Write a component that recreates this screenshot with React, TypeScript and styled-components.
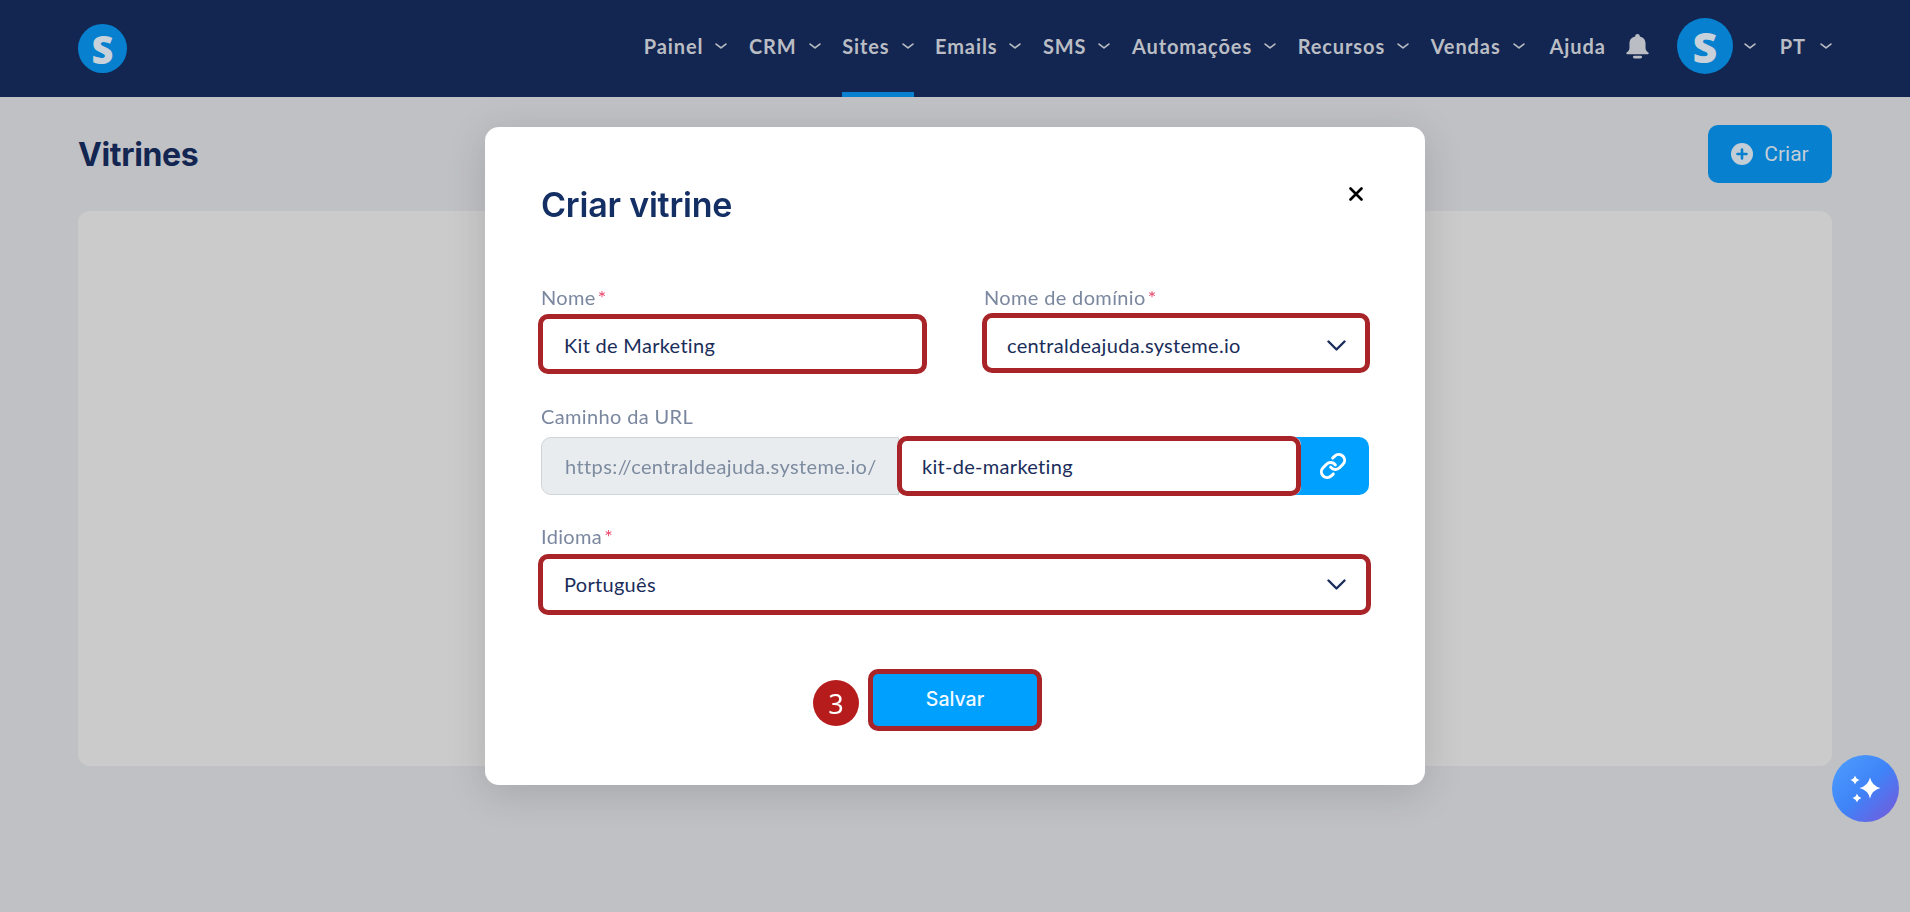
import React from "react";
import styled, { createGlobalStyle } from "styled-components";
import { Link as LinkIcon } from "lucide-react";

const Global = createGlobalStyle`
  html, body { margin: 0; height: 100%; overflow: hidden; background: #c0c1c5; }
  * { box-sizing: border-box; }
  body { font-family: "Lato", "Noto Sans", sans-serif; }
`;

const Bar = styled.header`
  height: 97px;
  background: #132651;
  display: flex;
  align-items: center;
  justify-content: space-between;
  padding: 0 78px;
`;

const LogoDot = styled.div`
  width: 49px;
  height: 49px;
  border-radius: 50%;
  background: #0680cf;
  color: #c9d2da;
  display: flex;
  align-items: center;
  justify-content: center;
  font: 800 38px/1 "Open Sans", sans-serif;
`;

const Nav = styled.nav`
  display: flex;
  align-items: center;
  height: 97px;
`;

const NavItem = styled.div<{ $active?: boolean; $after?: number; $gap?: number }>`
  height: 97px;
  display: flex;
  align-items: center;
  gap: ${(p) => p.$gap ?? 12}px;
  margin-right: ${(p) => p.$after ?? 21.5}px;
  border-bottom: 5px solid ${(p) => (p.$active ? "#0680cf" : "transparent")};
  color: #babdc4;
  font: 700 20px/1 "Lato", sans-serif;
  letter-spacing: 0.9px;
  white-space: nowrap;
`;

const BellWrap = styled.div`
  display: flex;
  margin: 0 28px 5px 0;
  color: #babdc4;
`;

const Avatar = styled.div`
  width: 56px;
  height: 56px;
  border-radius: 50%;
  background: #0680cf;
  color: #c9d2da;
  display: flex;
  align-items: center;
  justify-content: center;
  font: 800 43px/1 "Open Sans", sans-serif;
`;

const AvatarGroup = styled.div`
  display: flex;
  align-items: center;
  gap: 11px;
  margin: 0 24px 5px 0;
  color: #babdc4;
`;

const Main = styled.main`
  padding: 28px 78px 0;
`;

const PageHead = styled.div`
  display: flex;
  align-items: center;
  justify-content: space-between;
  height: 58px;
  margin-bottom: 28px;
`;

const PageTitle = styled.h1`
  margin: 0;
  padding-top: 2px;
  color: #132651;
  font: 700 32px/1 "Inter", sans-serif;
  letter-spacing: -0.35px;
`;

const CreateButton = styled.div`
  width: 124px;
  height: 58px;
  border-radius: 10px;
  background: #0680cf;
  color: #c3cdd6;
  display: flex;
  align-items: center;
  justify-content: center;
  gap: 11px;
  font: 400 21px/1 "Roboto", sans-serif;
`;

const Card = styled.section`
  width: 1754px;
  height: 555px;
  border-radius: 12px;
  background: #cbcbcc;
`;

const Overlay = styled.div`
  position: fixed;
  inset: 0;
  display: flex;
  justify-content: center;
  align-items: flex-start;
  padding-top: 127px;
`;

const Modal = styled.div`
  width: 940px;
  height: 658px;
  padding: 56px;
  background: #fff;
  border-radius: 14px;
  box-shadow: 0 8px 40px rgba(0, 0, 0, 0.14);
`;

const ModalHead = styled.div`
  display: flex;
  justify-content: space-between;
  align-items: flex-start;
  height: 103px;
`;

const ModalTitle = styled.h2`
  margin: 0;
  color: #132f63;
  font: 600 34px/44px "Inter", sans-serif;
  letter-spacing: -0.2px;
`;

const Close = styled.div`
  display: flex;
  margin: 4px 6px 0 0;
`;

const TwoCol = styled.div`
  display: grid;
  grid-template-columns: 383px 1fr;
  column-gap: 60px;
`;

const Field = styled.div<{ $top?: number }>`
  margin-top: ${(p) => p.$top ?? 0}px;
`;

const Label = styled.div<{ $gap?: number }>`
  height: 22px;
  margin-bottom: ${(p) => p.$gap ?? 8}px;
  color: #7a879e;
  font: 400 20px/22px "Lato", sans-serif;
  letter-spacing: 0.35px;
  white-space: nowrap;
`;

const Star = styled.span`
  color: #e8476a;
  margin-left: 2px;
`;

const Box = styled.div<{ $hl?: string }>`
  position: relative;
  height: 58px;
  padding: 0 23px;
  display: flex;
  align-items: center;
  justify-content: space-between;
  background: #fff;
  border-radius: 8px;
  color: #1a2d5a;
  font: 400 20px/1 "Lato", sans-serif;
  letter-spacing: 0.3px;
  white-space: nowrap;
  &::after {
    content: "";
    position: absolute;
    inset: ${(p) => p.$hl ?? "0"};
    border: 5px solid #a82428;
    border-radius: 10px;
    pointer-events: none;
  }
`;

const UrlRow = styled.div`
  display: flex;
  height: 58px;
`;

const Prefix = styled.div`
  width: 358px;
  padding-left: 23px;
  display: flex;
  align-items: center;
  background: #e9ecef;
  border: 1px solid #cfd4da;
  border-radius: 10px 0 0 10px;
  color: #7d8ba0;
  font: 400 20px/1 "Lato", sans-serif;
  letter-spacing: 0.4px;
  white-space: nowrap;
`;

const SlugBox = styled(Box)`
  width: 402px;
  z-index: 1;
`;

const LinkButton = styled.div`
  flex: 1;
  margin-left: -10px;
  padding-left: 5px;
  display: flex;
  align-items: center;
  justify-content: center;
  background: #00a0ff;
  color: #fff;
  border-radius: 0 10px 10px 0;
`;

const Footer = styled.div`
  display: flex;
  justify-content: center;
  margin-top: 59px;
`;

const Save = styled.div`
  position: relative;
  width: 168px;
  height: 56px;
  border-radius: 8px;
  background: #00a0ff;
  color: #f2faff;
  display: flex;
  align-items: center;
  justify-content: center;
  font: 500 19.5px/1 "Inter", sans-serif;
  &::after {
    content: "";
    position: absolute;
    inset: -3px;
    border: 5px solid #a82428;
    border-radius: 10px;
  }
`;

const StepBadge = styled.div`
  position: absolute;
  left: -58px;
  top: 8px;
  width: 46px;
  height: 46px;
  border-radius: 50%;
  background: #b71c1c;
  color: #fff;
  display: flex;
  align-items: center;
  justify-content: center;
  font: 400 27px/1 "Noto Sans", sans-serif;
`;

const Sparkle = styled.div`
  position: fixed;
  left: 1832px;
  top: 755px;
  width: 67px;
  height: 67px;
  border-radius: 50%;
  background: linear-gradient(135deg, #4d9fff 0%, #3f83f8 50%, #7a55d8 100%);
  display: flex;
`;

const Chevron = ({ w, h, sw }: { w: number; h: number; sw: number }) => (
  <svg width={w} height={h} viewBox={`0 0 ${w} ${h}`} fill="none" stroke="currentColor" strokeWidth={sw} strokeLinecap="round" strokeLinejoin="round">
    <polyline points={`${sw / 2 + 0.3},${sw / 2 + 0.3} ${w / 2},${h - sw / 2 - 0.3} ${w - sw / 2 - 0.3},${sw / 2 + 0.3}`} />
  </svg>
);

const NavChevron = () => <Chevron w={12} h={6} sw={1.6} />;

const items: { label: string; after?: number }[] = [
  { label: "Painel" },
  { label: "CRM" },
  { label: "Sites" },
  { label: "Emails" },
  { label: "SMS" },
  { label: "Automações" },
  { label: "Recursos" },
  { label: "Vendas", after: 25 },
];

export default function App() {
  return (
    <>
      <Global />
      <Bar>
        <LogoDot>S</LogoDot>
        <Nav>
          {items.map((t) => (
            <NavItem key={t.label} $active={t.label === "Sites"} $after={t.after}>
              {t.label}
              <NavChevron />
            </NavItem>
          ))}
          <NavItem $after={20}>Ajuda</NavItem>
          <BellWrap>
            <svg width="23" height="25" viewBox="0 0 20 26" preserveAspectRatio="none" fill="currentColor">
              <path d="M10 0a2 2 0 0 1 2 2v.6C15.5 3.5 17 6.5 17 10v4.5c0 2.2 1.2 3.6 2.6 5 .5.5.2 1.5-.6 1.5H1c-.8 0-1.1-1-.6-1.5C1.8 18 3 16.7 3 14.5V10C3 6.5 4.5 3.5 8 2.6V2a2 2 0 0 1 2-2z" />
              <rect x="6" y="22.5" width="8" height="3" rx="1.5" />
            </svg>
          </BellWrap>
          <AvatarGroup>
            <Avatar>S</Avatar>
            <NavChevron />
          </AvatarGroup>
          <NavItem $after={0} $gap={14}>
            PT
            <NavChevron />
          </NavItem>
        </Nav>
      </Bar>
      <Main>
        <PageHead>
          <PageTitle>Vitrines</PageTitle>
          <CreateButton>
            <svg width="22" height="22" viewBox="0 0 22 22">
              <circle cx="11" cy="11" r="11" fill="#c3cdd6" />
              <path d="M11 6.5v9M6.5 11h9" stroke="#0680cf" strokeWidth="2.6" strokeLinecap="round" />
            </svg>
            Criar
          </CreateButton>
        </PageHead>
        <Card />
      </Main>
      <Overlay>
        <Modal>
          <ModalHead>
            <ModalTitle>Criar vitrine</ModalTitle>
            <Close>
              <svg width="14" height="14" viewBox="0 0 14 14" stroke="#000" strokeWidth="2.6" strokeLinecap="round">
                <path d="M1.5 1.5l11 11M12.5 1.5l-11 11" />
              </svg>
            </Close>
          </ModalHead>
          <TwoCol>
            <Field>
              <Label>
                Nome<Star>*</Star>
              </Label>
              <Box $hl="-2px -3px 0 -3px">Kit de Marketing</Box>
            </Field>
            <Field>
              <Label>
                Nome de domínio<Star>*</Star>
              </Label>
              <Box $hl="-3px -1px 1px -2px">
                centraldeajuda.systeme.io
                <Chevron w={19} h={11} sw={2.4} />
              </Box>
            </Field>
          </TwoCol>
          <Field $top={31}>
            <Label $gap={10}>Caminho da URL</Label>
            <UrlRow>
              <Prefix>https://centraldeajuda.systeme.io/</Prefix>
              <SlugBox $hl="-1px 0 -1px -2px">kit-de-marketing</SlugBox>
              <LinkButton>
                <LinkIcon size={28} strokeWidth={2.6} />
              </LinkButton>
            </UrlRow>
          </Field>
          <Field $top={30}>
            <Label>
              Idioma<Star>*</Star>
            </Label>
            <Box $hl="-1px -2px -2px -3px">
              Português
              <Chevron w={19} h={11} sw={2.4} />
            </Box>
          </Field>
          <Footer>
            <Save>
              <StepBadge>3</StepBadge>
              Salvar
            </Save>
          </Footer>
        </Modal>
      </Overlay>
      <Sparkle>
        <svg width="67" height="67" viewBox="0 0 67 67" fill="#fff">
          <path d="M38 22.5Q40 31 48.5 33Q40 35 38 43.5Q36 35 27.5 33Q36 31 38 22.5Z" />
          <path d="M23 20.5Q24 24 27.5 25Q24 26 23 29.5Q22 26 18.5 25Q22 24 23 20.5Z" />
          <path d="M25 38.5Q26 42 29.5 43Q26 44 25 47.5Q24 44 20.5 43Q24 42 25 38.5Z" />
        </svg>
      </Sparkle>
    </>
  );
}
